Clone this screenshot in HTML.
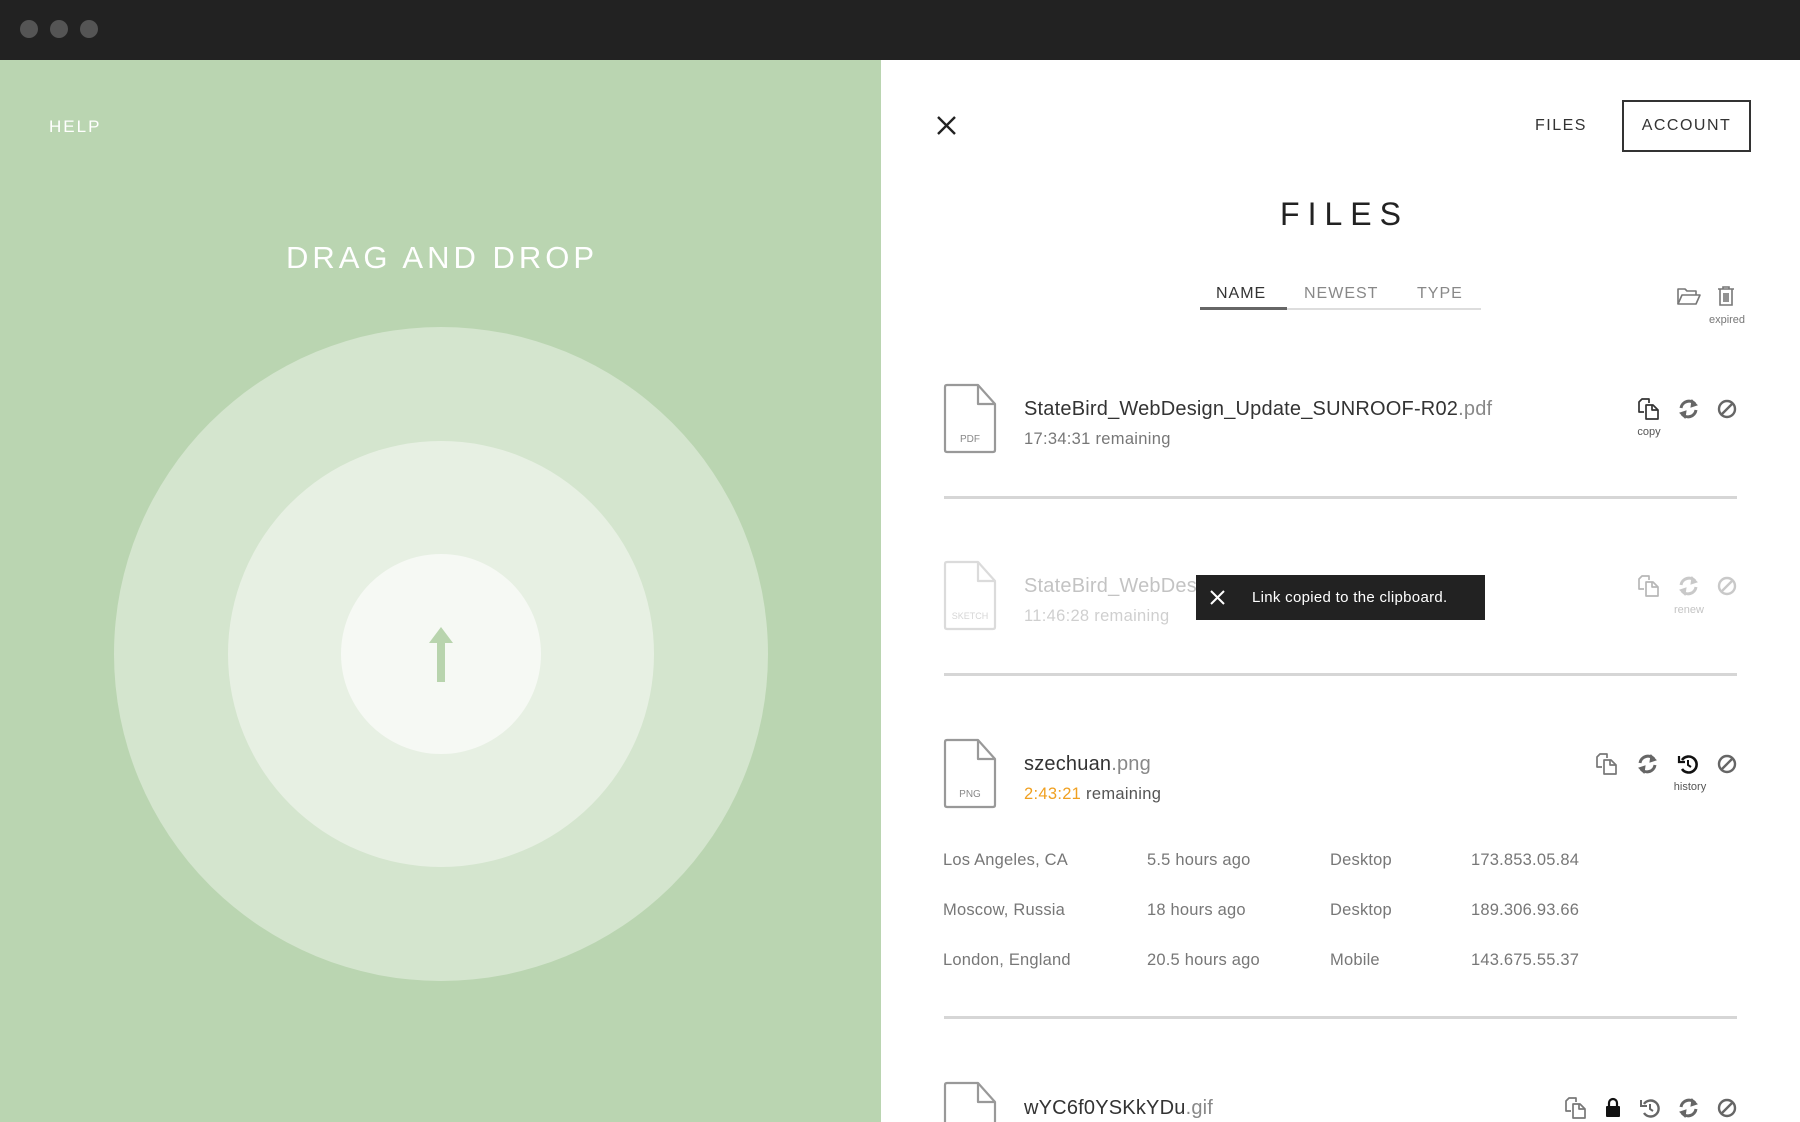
<!DOCTYPE html>
<html style="overflow:hidden;height:1122px"><head><meta charset="utf-8"><style>
*{margin:0;padding:0;box-sizing:border-box}
body{width:1800px;height:1122px;overflow:hidden;background:#fff;font-family:"Liberation Sans",sans-serif;position:relative}
#w{position:absolute;left:0;top:0;width:1800px;height:1122px;overflow:hidden}
.a{position:absolute;white-space:nowrap}
.bar{left:0;top:0;width:1800px;height:60px;background:#222}
.dot{width:18px;height:18px;border-radius:50%;background:#555;top:20px}
.left{left:0;top:60px;width:881px;height:1062px;background:#bad5b1;overflow:hidden}
.c{border-radius:50%;position:absolute}
.name{font-size:20px;color:#333;left:1024px;letter-spacing:0.2px}
.name span{color:#888}
.rem{font-size:16.5px;color:#777;left:1024px;letter-spacing:0.3px}
.div{left:944px;width:793px;height:3px;background:#d6d6d6}
.tbl{font-size:16.5px;color:#777;letter-spacing:0.2px}
.lbl{font-size:11px;color:#555;transform:translateX(-50%)}
svg.i{position:absolute;overflow:visible}
</style></head><body><div id="w">
<div class="a bar"></div>
<div class="a dot" style="left:20px"></div>
<div class="a dot" style="left:50px"></div>
<div class="a dot" style="left:80px"></div>

<div class="a left">
  <div class="a" style="left:49px;top:57px;font-size:17px;color:#fff;letter-spacing:2px">HELP</div>
  <div class="a" style="left:0;width:884px;text-align:center;top:180px;font-size:31px;color:#fff;letter-spacing:4px">DRAG AND DROP</div>
  <div class="c" style="left:114px;top:267px;width:654px;height:654px;background:#d4e5ce"></div>
  <div class="c" style="left:228px;top:381px;width:426px;height:426px;background:#e7f0e3"></div>
  <div class="c" style="left:341px;top:494px;width:200px;height:200px;background:#f6f9f4"></div>
  <svg class="i" style="left:426px;top:567px" width="30" height="56"><path d="M15 0 L27 16 H19 V55 H11 V16 H3 Z" fill="#b8d4ad"/></svg>
</div>

<svg class="i" style="left:937px;top:116px" width="19" height="19"><path d="M1 1L18 18M18 1L1 18" stroke="#222" stroke-width="2.4"/></svg>
<div class="a" style="left:1535px;top:117px;font-size:16px;color:#333;letter-spacing:1.5px">FILES</div>
<div class="a" style="left:1622px;top:100px;width:129px;height:52px;border:2px solid #333"></div>
<div class="a" style="left:1622px;width:129px;text-align:center;top:117px;font-size:16px;color:#333;letter-spacing:1.5px">ACCOUNT</div>
<div class="a" style="left:1200px;width:281px;text-align:center;top:196px;font-size:32px;color:#222;letter-spacing:8px;padding-left:8px">FILES</div>

<div class="a" style="left:1216px;top:285px;font-size:16px;color:#333;letter-spacing:1px">NAME</div>
<div class="a" style="left:1304px;top:285px;font-size:16px;color:#888;letter-spacing:1px">NEWEST</div>
<div class="a" style="left:1417px;top:285px;font-size:16px;color:#888;letter-spacing:1px">TYPE</div>
<div class="a" style="left:1200px;top:308px;width:281px;height:2px;background:#ddd"></div>
<div class="a" style="left:1200px;top:307px;width:87px;height:3px;background:#666"></div>

<svg class="i" style="left:1677px;top:287px" width="24" height="19" fill="none" stroke="#777" stroke-width="1.6" stroke-linejoin="round"><path d="M1 17V2H8L10 4H19V8"/><path d="M1 17L5 8H23L19 17Z"/></svg>
<svg class="i" style="left:1718px;top:286px" width="16" height="20" fill="none" stroke="#777" stroke-width="1.6"><path d="M0 3H16M5 3V1H11V3M2 3V19H14V3M6 7V16M8 7V16M10 7V16"/></svg>
<div class="a lbl" style="left:1727px;top:314px;color:#777">expired</div>

<svg class="i" style="left:944px;top:384px" width="52" height="70" fill="none" stroke="#999" stroke-width="2.2" stroke-linejoin="round"><path d="M3 1H34L51 20V66Q51 68 49 68H3Q1 68 1 66V3Q1 1 3 1Z"/><path d="M34 1V20H51"/><text x="26" y="58" font-size="10" fill="#888" stroke="none" text-anchor="middle" font-family="Liberation Sans">PDF</text></svg>
<div class="a name" style="top:398px">StateBird_WebDesign_Update_SUNROOF-R02<span>.pdf</span></div>
<div class="a rem" style="top:430px">17:34:31 remaining</div>
<svg class="i" style="left:1638px;top:398px" width="22" height="22" fill="none" stroke="#333" stroke-width="1.7" stroke-linejoin="round"><path d="M6 14H1V4L4 1H11V5"/><path d="M8 7H15L20 12V21H8Z"/><path d="M14 7V12H20"/></svg>
<svg class="i" style="left:1678px;top:399px" width="21" height="20" fill="none" stroke="#666" stroke-width="3"><path d="M3 9A8 8 0 0 1 17 5"/><path d="M18 11A8 8 0 0 1 4 15"/><path d="M14 1L19 6L13 8Z" fill="#666" stroke-width="1"/><path d="M7 19L2 14L8 12Z" fill="#666" stroke-width="1"/></svg>
<svg class="i" style="left:1717px;top:399px" width="20" height="20" fill="none" stroke="#666" stroke-width="2.4"><circle cx="10" cy="10" r="8"/><path d="M4 16L16 4"/></svg>
<div class="a lbl" style="left:1649px;top:426px">copy</div>
<div class="a div" style="top:496px"></div>

<div style="opacity:.35">
<svg class="i" style="left:944px;top:561px" width="52" height="70" fill="none" stroke="#999" stroke-width="2.2" stroke-linejoin="round"><path d="M3 1H34L51 20V66Q51 68 49 68H3Q1 68 1 66V3Q1 1 3 1Z"/><path d="M34 1V20H51"/><text x="26" y="58" font-size="9" fill="#888" stroke="none" text-anchor="middle" font-family="Liberation Sans">SKETCH</text></svg>
<div class="a name" style="top:575px;color:#555">StateBird_WebDes</div>
<div class="a rem" style="top:607px">11:46:28 remaining</div>
<svg class="i" style="left:1638px;top:575px" width="22" height="22" fill="none" stroke="#333" stroke-width="1.7" stroke-linejoin="round"><path d="M6 14H1V4L4 1H11V5"/><path d="M8 7H15L20 12V21H8Z"/><path d="M14 7V12H20"/></svg>
<svg class="i" style="left:1678px;top:576px" width="21" height="20" fill="none" stroke="#666" stroke-width="3"><path d="M3 9A8 8 0 0 1 17 5"/><path d="M18 11A8 8 0 0 1 4 15"/><path d="M14 1L19 6L13 8Z" fill="#666" stroke-width="1"/><path d="M7 19L2 14L8 12Z" fill="#666" stroke-width="1"/></svg>
<svg class="i" style="left:1717px;top:576px" width="20" height="20" fill="none" stroke="#666" stroke-width="2.4"><circle cx="10" cy="10" r="8"/><path d="M4 16L16 4"/></svg>
<div class="a lbl" style="left:1689px;top:604px">renew</div>
</div>
<div class="a" style="left:1196px;top:575px;width:289px;height:45px;background:#222"></div>
<svg class="i" style="left:1210px;top:590px" width="15" height="15"><path d="M1 1L14 14M14 1L1 14" stroke="#fff" stroke-width="2"/></svg>
<div class="a" style="left:1252px;top:589px;font-size:15px;color:#fff;letter-spacing:0.3px">Link copied to the clipboard.</div>
<div class="a div" style="top:673px"></div>

<svg class="i" style="left:944px;top:739px" width="52" height="70" fill="none" stroke="#999" stroke-width="2.2" stroke-linejoin="round"><path d="M3 1H34L51 20V66Q51 68 49 68H3Q1 68 1 66V3Q1 1 3 1Z"/><path d="M34 1V20H51"/><text x="26" y="58" font-size="10" fill="#888" stroke="none" text-anchor="middle" font-family="Liberation Sans">PNG</text></svg>
<div class="a name" style="top:753px">szechuan<span>.png</span></div>
<div class="a rem" style="top:785px"><span style="color:#f0a020">2:43:21</span> <span style="color:#555">remaining</span></div>
<svg class="i" style="left:1596px;top:753px" width="22" height="22" fill="none" stroke="#777" stroke-width="1.7" stroke-linejoin="round"><path d="M6 14H1V4L4 1H11V5"/><path d="M8 7H15L20 12V21H8Z"/><path d="M14 7V12H20"/></svg>
<svg class="i" style="left:1637px;top:754px" width="21" height="20" fill="none" stroke="#666" stroke-width="3"><path d="M3 9A8 8 0 0 1 17 5"/><path d="M18 11A8 8 0 0 1 4 15"/><path d="M14 1L19 6L13 8Z" fill="#666" stroke-width="1"/><path d="M7 19L2 14L8 12Z" fill="#666" stroke-width="1"/></svg>
<svg class="i" style="left:1678px;top:754px" width="20" height="20" fill="none" stroke="#111" stroke-width="2.6"><path d="M4 6A8 8 0 1 1 4 15"/><path d="M1 2V8H7" stroke-width="2.2"/><path d="M10 6V11L13 13" stroke-width="2"/></svg>
<svg class="i" style="left:1717px;top:754px" width="20" height="20" fill="none" stroke="#666" stroke-width="2.4"><circle cx="10" cy="10" r="8"/><path d="M4 16L16 4"/></svg>
<div class="a lbl" style="left:1690px;top:781px">history</div>

<div class="a tbl" style="left:943px;top:851px">Los Angeles, CA</div>
<div class="a tbl" style="left:1147px;top:851px">5.5 hours ago</div>
<div class="a tbl" style="left:1330px;top:851px">Desktop</div>
<div class="a tbl" style="left:1471px;top:851px">173.853.05.84</div>
<div class="a tbl" style="left:943px;top:901px">Moscow, Russia</div>
<div class="a tbl" style="left:1147px;top:901px">18 hours ago</div>
<div class="a tbl" style="left:1330px;top:901px">Desktop</div>
<div class="a tbl" style="left:1471px;top:901px">189.306.93.66</div>
<div class="a tbl" style="left:943px;top:951px">London, England</div>
<div class="a tbl" style="left:1147px;top:951px">20.5 hours ago</div>
<div class="a tbl" style="left:1330px;top:951px">Mobile</div>
<div class="a tbl" style="left:1471px;top:951px">143.675.55.37</div>
<div class="a div" style="top:1016px"></div>

<svg class="i" style="left:944px;top:1082px" width="52" height="70" fill="none" stroke="#999" stroke-width="2.2" stroke-linejoin="round"><path d="M3 1H34L51 20V66Q51 68 49 68H3Q1 68 1 66V3Q1 1 3 1Z"/><path d="M34 1V20H51"/></svg>
<div class="a name" style="top:1097px">wYC6f0YSKkYDu<span>.gif</span></div>
<svg class="i" style="left:1565px;top:1097px" width="22" height="22" fill="none" stroke="#777" stroke-width="1.7" stroke-linejoin="round"><path d="M6 14H1V4L4 1H11V5"/><path d="M8 7H15L20 12V21H8Z"/><path d="M14 7V12H20"/></svg>
<svg class="i" style="left:1605px;top:1097px" width="16" height="20"><path d="M4 9V6A4 4 0 0 1 12 6V9" fill="none" stroke="#111" stroke-width="2.2"/><rect x="1" y="9" width="14" height="11" rx="1" fill="#111"/></svg>
<svg class="i" style="left:1640px;top:1098px" width="20" height="20" fill="none" stroke="#666" stroke-width="2.4"><path d="M4 6A8 8 0 1 1 4 15"/><path d="M1 2V8H7" stroke-width="2"/><path d="M10 6V11L13 13" stroke-width="2"/></svg>
<svg class="i" style="left:1678px;top:1098px" width="21" height="20" fill="none" stroke="#666" stroke-width="3"><path d="M3 9A8 8 0 0 1 17 5"/><path d="M18 11A8 8 0 0 1 4 15"/><path d="M14 1L19 6L13 8Z" fill="#666" stroke-width="1"/><path d="M7 19L2 14L8 12Z" fill="#666" stroke-width="1"/></svg>
<svg class="i" style="left:1717px;top:1098px" width="20" height="20" fill="none" stroke="#666" stroke-width="2.4"><circle cx="10" cy="10" r="8"/><path d="M4 16L16 4"/></svg>
</div></body></html>
